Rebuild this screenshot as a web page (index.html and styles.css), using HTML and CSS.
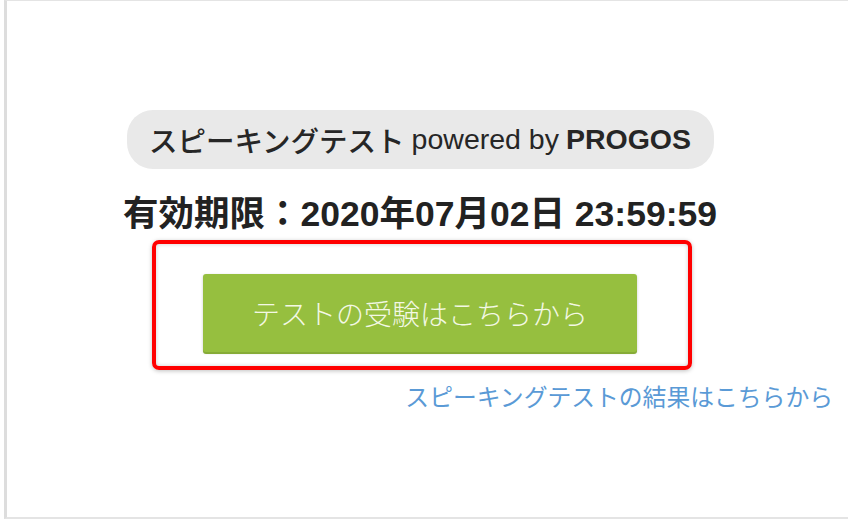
FILE: index.html
```html
<!DOCTYPE html>
<html lang="ja">

<head>
    <meta charset="UTF-8">
    <meta name="viewport" content="width=device-width, initial-scale=1.0">
    <title>スピーキングテスト</title>
    <link rel="stylesheet" href="styles.css">
</head>

<body>
    <div class="frame">
        <div class="content">
            <div class="title-pill">
                スピーキングテスト <span class="powered">powered by</span> <strong>PROGOS</strong>
            </div>

            <div class="deadline">有効期限：2020年07月02日 23:59:59</div>

            <div class="highlight">
                <button class="start-btn">テストの受験はこちらから</button>
            </div>

            <div class="result-row">
                <a href="#" class="result-link">スピーキングテストの結果はこちらから</a>
            </div>
        </div>
    </div>
</body>

</html>
```

FILE: styles.css
```css
* {
    box-sizing: border-box;
    margin: 0;
    padding: 0;
}

body {
    background: #ffffff;
    font-family: "Liberation Sans", Arial, "Noto Sans CJK JP", sans-serif;
    color: #222222;
}

.frame {
    margin-left: 4px;
    height: 519px;
    border-left: 3px solid #dddddd;
    border-top: 1px solid #e4e4e4;
    border-bottom: 2px solid #e4e4e4;
    overflow: hidden;
}

.content {
    display: flex;
    flex-direction: column;
    align-items: center;
    padding-top: 109px;
    padding-right: 15px;
}

.title-pill {
    width: 587px;
    height: 59px;
    border-radius: 26px;
    background: #e9e9e9;
    display: flex;
    align-items: center;
    justify-content: center;
    gap: 7px;
    font-size: 28.5px;
    font-weight: 500;
    color: #262626;
    white-space: nowrap;
}

.title-pill .powered {
    font-weight: 400;
}

.title-pill strong {
    font-weight: 700;
}

.deadline {
    margin-top: 22px;
    font-size: 35.5px;
    font-weight: 700;
    line-height: 46px;
    color: #222222;
    white-space: nowrap;
}

.highlight {
    margin-top: 3px;
    margin-left: 4px;
    width: 540px;
    height: 130px;
    border: 4px solid #ff0000;
    border-radius: 7px;
    box-shadow: 0 1px 4px rgba(0, 0, 0, 0.25), inset 0 0 4px rgba(0, 0, 0, 0.2);
    padding: 30px 0 0 47px;
}

.start-btn {
    width: 434px;
    height: 78px;
    border: none;
    border-radius: 3px;
    background: #96bf3f;
    box-shadow: 0 2px 0 #86ab37, 0 1px 3px rgba(0, 0, 0, 0.2);
    color: #f3f8e4;
    font-family: "Noto Sans CJK JP", sans-serif;
    font-size: 28px;
    font-weight: 300;
    cursor: pointer;
}

.result-row {
    width: 100%;
    display: flex;
    justify-content: flex-end;
    margin-top: 8px;
}

.result-link {
    font-family: "Noto Sans CJK JP", sans-serif;
    font-size: 23.8px;
    font-weight: 400;
    color: #5a9ad6;
    text-decoration: none;
}
```
